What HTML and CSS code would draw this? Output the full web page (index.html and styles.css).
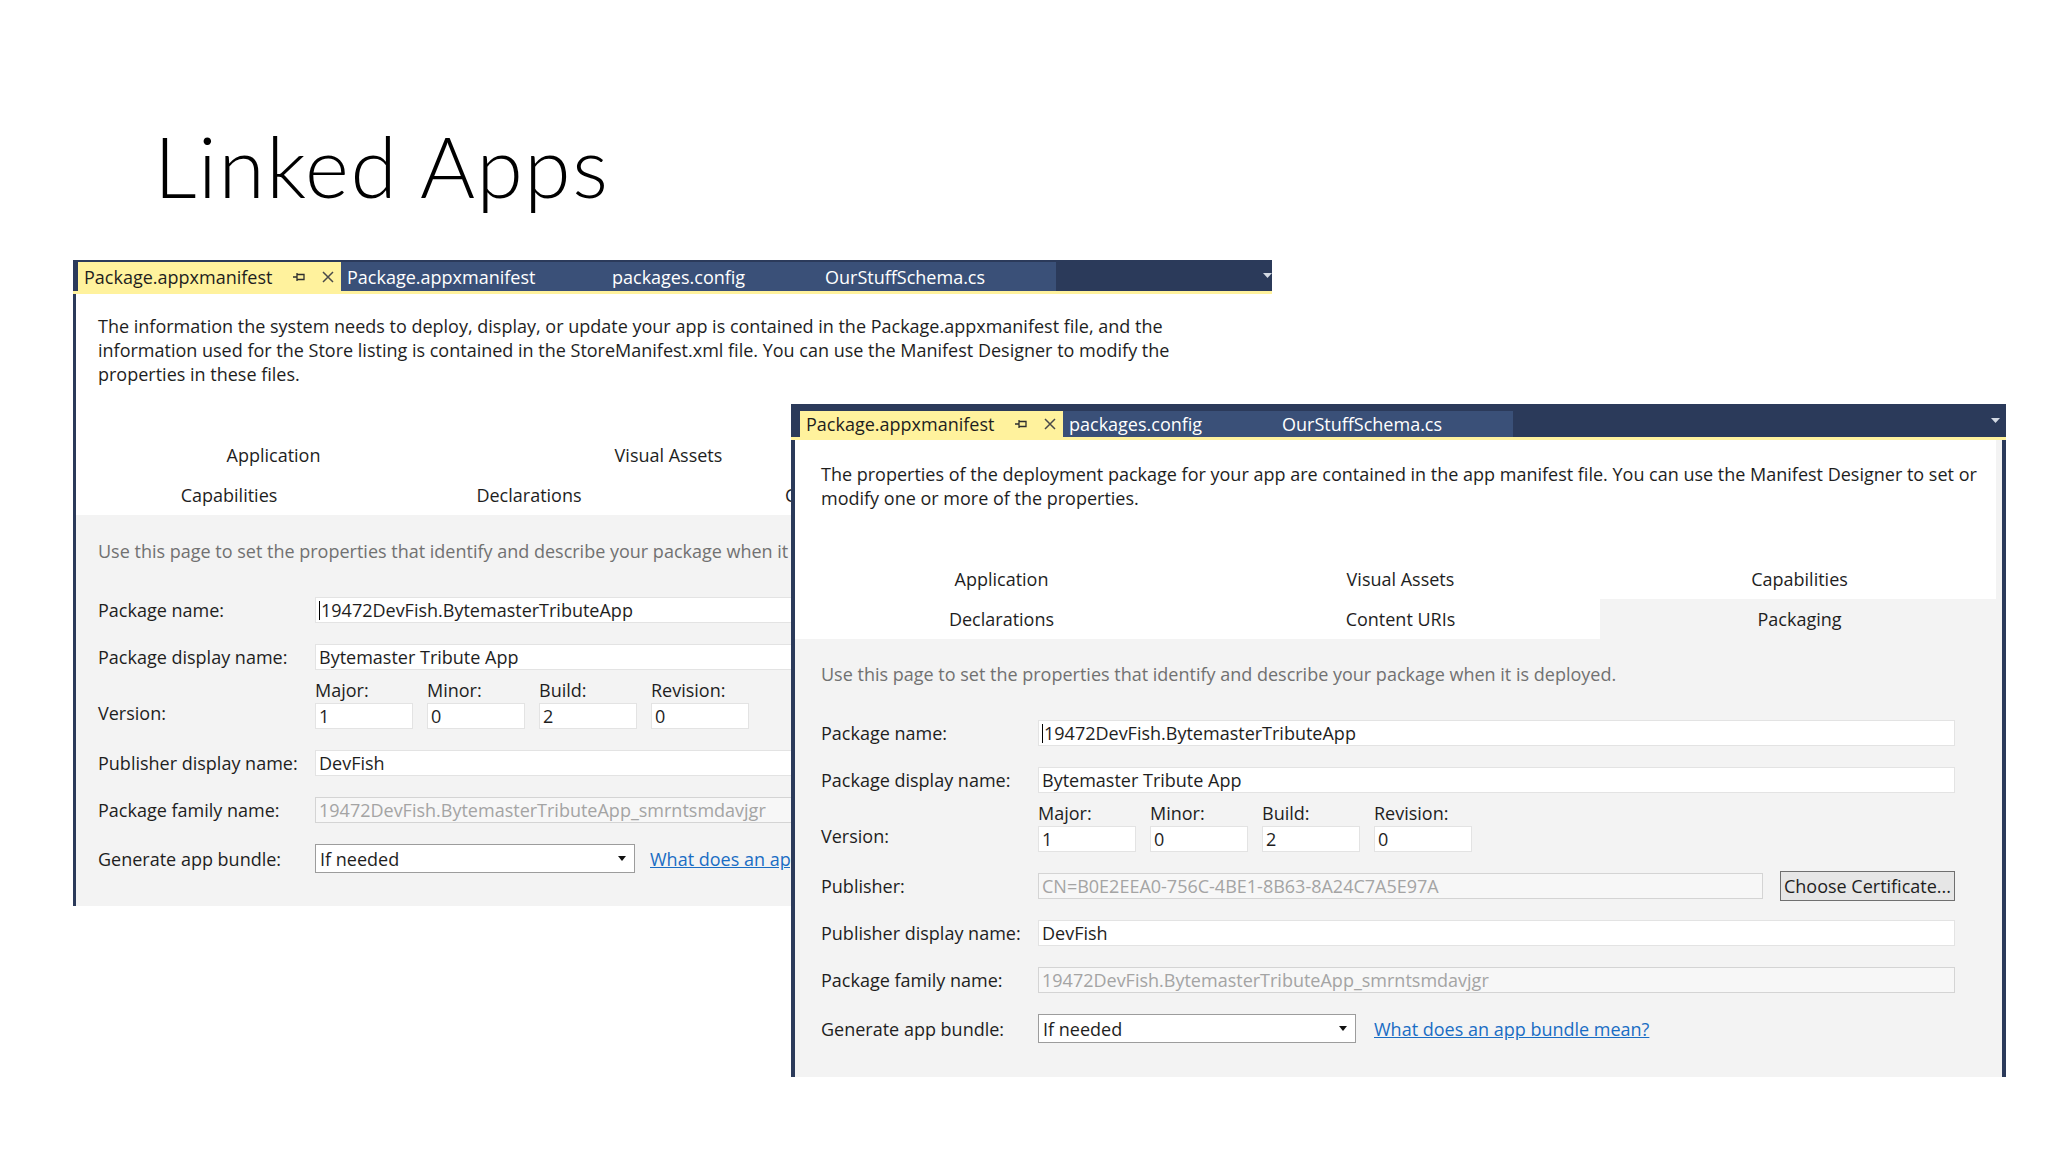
FILE: index.html
```html
<!DOCTYPE html>
<html>
<head>
<meta charset="utf-8">
<title>Linked Apps</title>
<link rel="stylesheet" href="styles.css">
</head>
<body>
<div class="slide">
  <h1 class="title">Linked Apps</h1>

  <div class="win win-back">
    <div class="tabbar">
      <div class="tab active">
        <span class="tab-name">Package.appxmanifest</span>
        <svg class="pin" width="13" height="10" viewBox="0 0 13 10"><path d="M0 5H4M4 1V9M4 2.5H11V7.5H4" fill="none" stroke="#2e2e2e" stroke-width="1.3"/></svg>
        <svg class="close" width="12" height="12" viewBox="0 0 12 12"><path d="M1 1L11 11M11 1L1 11" stroke="#4a4a4a" stroke-width="1.5"/></svg>
      </div>
      <div class="tab t-manifest">Package.appxmanifest</div>
      <div class="tab t-config">packages.config</div>
      <div class="tab t-schema">OurStuffSchema.cs</div>
      <div class="more"><svg width="9" height="5" viewBox="0 0 9 5"><path d="M0 0H9L4.5 5Z" fill="#d3d9e3"/></svg></div>
    </div>
    <div class="body">
      <div class="top">
        <p class="intro">The information the system needs to deploy, display, or update your app is contained in the Package.appxmanifest file, and the<br>information used for the Store listing is contained in the StoreManifest.xml file. You can use the Manifest Designer to modify the<br>properties in these files.</p>
        <div class="nav">
          <div class="nav-row r-a"><span>Application</span><span>Visual Assets</span></div>
          <div class="nav-row r-b"><span>Capabilities</span><span>Declarations</span><span>Content URIs</span></div>
        </div>
      </div>
      <div class="form">
        <div class="hint">Use this page to set the properties that identify and describe your package when it is deployed.</div>
        <div class="rows">
          <div class="row"><span class="lbl">Package name:</span><div class="field wide"><span class="caret"></span>19472DevFish.BytemasterTributeApp</div></div>
          <div class="row"><span class="lbl">Package display name:</span><div class="field wide">Bytemaster Tribute App</div></div>
          <div class="row version">
            <span class="lbl">Version:</span>
            <div class="ver"><span class="ver-lbl">Major:</span><div class="field">1</div></div>
            <div class="ver"><span class="ver-lbl">Minor:</span><div class="field">0</div></div>
            <div class="ver"><span class="ver-lbl">Build:</span><div class="field">2</div></div>
            <div class="ver"><span class="ver-lbl">Revision:</span><div class="field">0</div></div>
          </div>
          <div class="row"><span class="lbl">Publisher display name:</span><div class="field wide">DevFish</div></div>
          <div class="row"><span class="lbl">Package family name:</span><div class="field wide disabled">19472DevFish.BytemasterTributeApp_smrntsmdavjgr</div></div>
          <div class="row bundle"><span class="lbl">Generate app bundle:</span><div class="select">If needed<span class="arrow"></span></div><a class="link">What does an app bundle mean?</a></div>
        </div>
      </div>
    </div>
  </div>

  <div class="win win-front">
    <div class="tabbar">
      <div class="tab active">
        <span class="tab-name">Package.appxmanifest</span>
        <svg class="pin" width="13" height="10" viewBox="0 0 13 10"><path d="M0 5H4M4 1V9M4 2.5H11V7.5H4" fill="none" stroke="#2e2e2e" stroke-width="1.3"/></svg>
        <svg class="close" width="12" height="12" viewBox="0 0 12 12"><path d="M1 1L11 11M11 1L1 11" stroke="#4a4a4a" stroke-width="1.5"/></svg>
      </div>
      <div class="tab t-config">packages.config</div>
      <div class="tab t-schema">OurStuffSchema.cs</div>
      <div class="more"><svg width="9" height="5" viewBox="0 0 9 5"><path d="M0 0H9L4.5 5Z" fill="#d3d9e3"/></svg></div>
    </div>
    <div class="body">
      <div class="top">
        <p class="intro">The properties of the deployment package for your app are contained in the app manifest file. You can use the Manifest Designer to set or<br>modify one or more of the properties.</p>
        <div class="nav">
          <div class="nav-row"><span>Application</span><span>Visual Assets</span><span>Capabilities</span></div>
          <div class="nav-row"><span>Declarations</span><span>Content URIs</span><span class="selected">Packaging</span></div>
        </div>
      </div>
      <div class="form">
        <div class="hint">Use this page to set the properties that identify and describe your package when it is deployed.</div>
        <div class="rows">
          <div class="row"><span class="lbl">Package name:</span><div class="field wide"><span class="caret"></span>19472DevFish.BytemasterTributeApp</div></div>
          <div class="row"><span class="lbl">Package display name:</span><div class="field wide">Bytemaster Tribute App</div></div>
          <div class="row version">
            <span class="lbl">Version:</span>
            <div class="ver"><span class="ver-lbl">Major:</span><div class="field">1</div></div>
            <div class="ver"><span class="ver-lbl">Minor:</span><div class="field">0</div></div>
            <div class="ver"><span class="ver-lbl">Build:</span><div class="field">2</div></div>
            <div class="ver"><span class="ver-lbl">Revision:</span><div class="field">0</div></div>
          </div>
          <div class="row"><span class="lbl">Publisher:</span><div class="field publisher disabled">CN=B0E2EEA0-756C-4BE1-8B63-8A24C7A5E97A</div><div class="button">Choose Certificate...</div></div>
          <div class="row"><span class="lbl">Publisher display name:</span><div class="field wide">DevFish</div></div>
          <div class="row"><span class="lbl">Package family name:</span><div class="field wide disabled">19472DevFish.BytemasterTributeApp_smrntsmdavjgr</div></div>
          <div class="row bundle"><span class="lbl">Generate app bundle:</span><div class="select">If needed<span class="arrow"></span></div><a class="link">What does an app bundle mean?</a></div>
        </div>
      </div>
    </div>
  </div>
</div>
</body>
</html>
```

FILE: styles.css
```css
* { box-sizing: border-box; }
html, body { margin: 0; padding: 0; background: #ffffff; }
body {
  width: 2048px;
  height: 1152px;
  overflow: hidden;
  font-family: "Open Sans", "Noto Sans", sans-serif;
  font-size: 18px;
  color: #1e1e1e;
}
.slide { position: relative; width: 2048px; height: 1152px; padding-top: 124px; }
.title {
  margin: 0 0 0 154px;
  font-family: Lato, "Open Sans", sans-serif;
  font-weight: 300;
  font-size: 84px;
  line-height: 84px;
  letter-spacing: 1.6px;
  color: #000;
}

/* windows */
.win { display: flex; flex-direction: column; }
.win-back { margin: 52px 0 0 73px; width: 1199px; height: 646px; }
.win-front { position: absolute; left: 791px; top: 404px; width: 1215px; height: 673px; z-index: 2; }

.tabbar {
  flex: none;
  display: flex;
  align-items: flex-end;
  background: #2b3a5a;
  border-bottom: 3px solid #fff29d;
  overflow: hidden;
}
.win-back .tabbar { height: 34px; padding-left: 5px; }
.win-front .tabbar { height: 36px; padding-left: 9px; }
.tab {
  flex: none;
  display: flex;
  align-items: center;
  padding-left: 6px;
  white-space: nowrap;
  background: #3a5078;
  color: #ffffff;
}
.win-back .tab { height: 29px; }
.win-front .tab { height: 26px; }
.tab.active { width: 263px; background: #fff29d; color: #1e1e1e; }
.tab-name { width: 209px; flex: none; }
.pin { flex: none; }
.close { flex: none; margin-left: 16px; }
.t-manifest { width: 265px; }
.t-config { width: 213px; }
.t-schema { width: 237px; }
.more { margin-left: auto; align-self: center; display: flex; padding-right: 6px; }
.win-back .more { margin-right: -6px; }

.body { flex: 1; display: flex; flex-direction: column; background: #f3f3f3; }
.win-back .body { border-left: 3px solid #2b3a5a; }
.win-front .body { border-left: 4px solid #2b3a5a; border-right: 4px solid #2b3a5a; }

.top { background: #ffffff; }
.win-front .top { margin-right: 6px; }
.intro { margin: 0 0 49px; line-height: 24px; white-space: nowrap; }
.win-back .intro { padding: 20px 22px 0; }
.win-front .intro { padding: 22px 26px 0; }

.nav-row { display: flex; height: 40px; align-items: stretch; }
.nav-row span { display: flex; align-items: center; justify-content: center; white-space: nowrap; flex: none; }
.win-back .nav { width: 718px; overflow: hidden; }
.win-back .r-a span { width: 395px; }
.win-back .r-b { padding-left: 3px; }
.win-back .r-b span { width: 300px; }
.win-back .r-b span:last-child { justify-content: flex-start; padding-left: 106px; }
.win-front .nav { padding-left: 7px; }
.win-front .nav-row span { width: 399px; }
.nav-row span.selected { background: #f3f3f3; }

/* form */
.form { flex: 1; }
.win-back .form { padding: 24px 0 0 22px; width: 718px; overflow: hidden; }
.win-front .form { padding: 23px 26px 0; }
.hint { color: #717171; line-height: 24px; white-space: nowrap; overflow: hidden; }
.rows { margin-top: 34px; display: flex; flex-direction: column; gap: 21px; }
.row { display: flex; align-items: center; height: 26px; }
.lbl { width: 217px; flex: none; white-space: nowrap; }
.field {
  flex: none;
  height: 26px;
  background: #ffffff;
  border: 1px solid #e3e3e3;
  padding: 0 3px;
  line-height: 24px;
  white-space: nowrap;
  overflow: hidden;
  display: flex;
  align-items: center;
}
.field.disabled { background: #f7f7f7; border-color: #d4d4d4; color: #a4a4a4; }
.caret { display: inline-block; width: 0; height: 19px; border-left: 1px solid #000; margin-right: 1px; }
.win-back .field.wide { width: 480px; }
.win-front .field.wide { width: 917px; }
.field.publisher { width: 725px; }
.button {
  flex: none;
  margin-left: 17px;
  width: 175px;
  height: 30px;
  border: 1px solid #6f6f6f;
  background: #e6e6e6;
  display: flex;
  align-items: center;
  justify-content: center;
  white-space: nowrap;
}

.row.version { height: 49px; align-items: flex-end; margin-top: -11px; }
.row.version .lbl { line-height: 26px; padding-bottom: 3px; }
.ver { display: flex; flex-direction: column; width: 98px; margin-right: 14px; flex: none; }
.ver-lbl { line-height: 20px; margin-bottom: 3px; white-space: nowrap; }
.ver .field { width: 98px; }

.row.bundle { height: 29px; }
.select {
  flex: none;
  height: 29px;
  background: #ffffff;
  border: 1px solid #9c9c9c;
  padding: 0 8px 0 4px;
  display: flex;
  align-items: center;
  justify-content: space-between;
  white-space: nowrap;
}
.win-back .select { width: 320px; }
.win-front .select { width: 318px; }
.arrow { width: 0; height: 0; border-left: 4px solid transparent; border-right: 4px solid transparent; border-top: 5px solid #111; }
.link { color: #1a6dc4; text-decoration: underline; white-space: nowrap; }
.win-back .link { margin-left: 15px; }
.win-front .link { margin-left: 18px; }
```
